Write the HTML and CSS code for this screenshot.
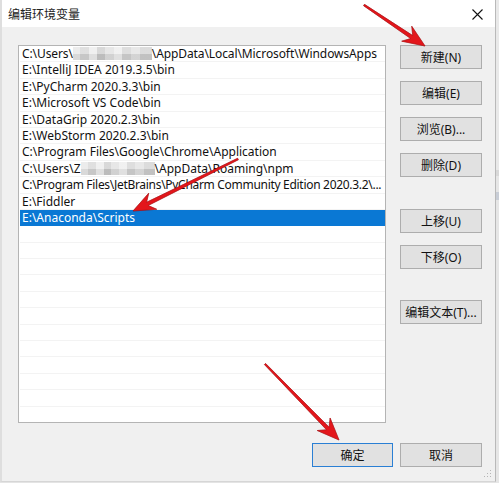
FILE: index.html
```html
<!DOCTYPE html>
<html lang="zh-CN">
<head>
<meta charset="utf-8">
<title>编辑环境变量</title>
<link rel="stylesheet" href="styles.css">
</head>
<body>
<div class="screen">
  <div class="dialog">
    <div class="titlebar">
      <span class="title">编辑环境变量</span>
      <svg class="close" width="11" height="11" viewBox="0 0 11 11"><path d="M0.5 0.5 L10.5 10.5 M10.5 0.5 L0.5 10.5" stroke="#111" stroke-width="1.1" fill="none"/></svg>
    </div>
    <div class="body">
      <div class="main">
        <div class="list">
          <div class="row tight1">C:\Users\<span class="mosaic m1"></span>\AppData\Local\Microsoft\WindowsApps</div>
          <div class="row">E:\IntelliJ IDEA 2019.3.5\bin</div>
          <div class="row">E:\PyCharm 2020.3.3\bin</div>
          <div class="row">E:\Microsoft VS Code\bin</div>
          <div class="row">E:\DataGrip 2020.2.3\bin</div>
          <div class="row">E:\WebStorm 2020.2.3\bin</div>
          <div class="row">C:\Program Files\Google\Chrome\Application</div>
          <div class="row">C:\Users\Z<span class="mosaic m2"></span>\AppData\Roaming\npm</div>
          <div class="row tight2">C:\Program Files\JetBrains\PyCharm Community Edition 2020.3.2\...</div>
          <div class="row">E:\Fiddler</div>
          <div class="row selected">E:\Anaconda\Scripts</div>
          <div class="row"></div>
          <div class="row"></div>
          <div class="row"></div>
          <div class="row"></div>
          <div class="row"></div>
          <div class="row"></div>
          <div class="row"></div>
          <div class="row"></div>
          <div class="row"></div>
          <div class="row"></div>
          <div class="row"></div>
          <div class="row"></div>
        </div>
        <div class="side">
          <button class="btn">新建(N)</button>
          <button class="btn">编辑(E)</button>
          <button class="btn">浏览(B)...</button>
          <button class="btn">删除(D)</button>
          <button class="btn group">上移(U)</button>
          <button class="btn">下移(O)</button>
          <button class="btn group2">编辑文本(T)...</button>
        </div>
      </div>
      <div class="footer">
        <button class="btn primary">确定</button>
        <button class="btn">取消</button>
      </div>
    </div>
    <svg class="grip" width="8" height="8" viewBox="0 0 8 8"><g fill="#b5b5b5"><rect x="6" y="0" width="1" height="1"/><rect x="3" y="3" width="1" height="1"/><rect x="6" y="3" width="1" height="1"/><rect x="0" y="6" width="1" height="1"/><rect x="3" y="6" width="1" height="1"/><rect x="6" y="6" width="1" height="1"/></g></svg>
  </div>
  <div class="backdrop"></div>
  <svg class="arrows" width="499" height="483" viewBox="0 0 499 483">
    <g fill="#e3161b" stroke="#b30d10" stroke-width="0.6" stroke-linejoin="round">
      <polygon points="363.55,5.66 410.72,38.56 401.72,41.19 425,46 411.76,26.25 412.72,35.58 364.45,4.34"/>
      <polygon points="237.64,158.28 146.54,202.29 148.71,193.17 133,211 156.71,209.29 148.14,205.51 238.36,159.72"/>
      <polygon points="264.43,364.56 326.56,429.79 317.22,430.52 339,440 330.10,417.98 329.14,427.29 265.57,363.44"/>
    </g>
  </svg>
</div>
</body>
</html>
```

FILE: styles.css
```css
* { box-sizing: border-box; }
html, body { margin: 0; padding: 0; }
body {
  width: 499px;
  height: 483px;
  overflow: hidden;
  background: #e4e4e4;
  font-family: "Segoe UI", "Noto Sans", "Noto Sans CJK SC", sans-serif;
  font-size: 12px;
  color: #000;
}
.screen {
  position: relative;
  display: flex;
  width: 499px;
  height: 483px;
}
.dialog {
  position: relative;
  width: 496px;
  height: 482px;
  background: #f0f0f0;
  border-left: 2px solid #dedede;
  border-right: 1px solid #b9b9b9;
  border-bottom: 1px solid #d6d6d6;
  display: flex;
  flex-direction: column;
}
.titlebar {
  height: 27px;
  background: #fff;
  display: flex;
  align-items: center;
  justify-content: space-between;
  padding: 0 12px 0 6px;
  flex: none;
}
.title {
  font-family: "Noto Sans CJK SC", sans-serif;
  font-size: 12px;
  color: #222;
}
.close { display: block; margin-top: 1px; }
.body {
  flex: 1;
  display: flex;
  flex-direction: column;
  padding: 18px 13px 0 16px;
}
.main {
  display: flex;
  gap: 14px;
}
.list {
  width: 368px;
  height: 378px;
  background: #fff;
  border: 1px solid #b4b4b4;
  padding: 0 0 0 1px;
  overflow: hidden;
}
.row {
  height: 16.4px;
  line-height: 16px;
  padding-left: 2px;
  white-space: nowrap;
  overflow: hidden;
  border-bottom: 1px solid #f3f3f3;
  color: #111;
}
.row.tight1 { letter-spacing: -0.1px; }
.row.tight2 { letter-spacing: -0.3px; }
.row.selected {
  background: #0a78d4;
  color: #fff;
  border-bottom-color: #0a78d4;
}
.mosaic {
  display: inline-block;
  vertical-align: -2px;
  height: 13px;
  background:
    linear-gradient(180deg, rgba(255,255,255,0.35) 0 50%, rgba(0,0,0,0.04) 50% 100%),
    linear-gradient(90deg, #e2e2e2 0 9%, #cfcfcf 9% 20%, #e8e8e8 20% 31%, #c4c4c4 31% 40%, #dadada 40% 52%, #e9e9e9 52% 62%, #cdcdcd 62% 73%, #dcdcdc 73% 85%, #c9c9c9 85% 100%);
}
.m1 { width: 79px; }
.m2 { width: 74px; }
.side {
  width: 82px;
  display: flex;
  flex-direction: column;
  gap: 12px;
}
.btn {
  width: 82px;
  height: 24px;
  background: #e1e1e1;
  border: 1px solid #adadad;
  font-family: "Segoe UI", "Noto Sans", "Noto Sans CJK SC", sans-serif;
  font-size: 12px;
  color: #111;
  padding: 0;
  margin: 0;
}
.btn.group { margin-top: 20px; }
.btn.group2 { margin-top: 19px; }
.btn.primary {
  border: 1px solid #2a7fd4;
  width: 81px;
}
.footer {
  margin-top: 20px;
  display: flex;
  justify-content: flex-end;
  gap: 7px;
}
.grip {
  position: absolute;
  right: 3px;
  bottom: 3px;
}
.backdrop {
  flex: 1;
  background: linear-gradient(180deg, #e9e9e9 0 170px, #d8d8d8 170px 176px, #e6e6e6 176px 192px, #c8cdd6 192px 200px, #e6e6e6 200px 100%);
}
.arrows {
  position: absolute;
  left: 0;
  top: 0;
  pointer-events: none;
  filter: drop-shadow(0.5px 0.8px 0.6px rgba(90,0,0,0.45));
}
```
